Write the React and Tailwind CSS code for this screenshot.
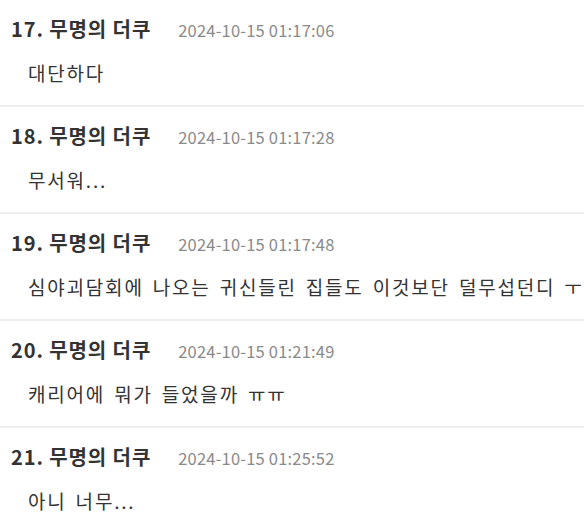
const comments = [
  { no: 17, name: '무명의 더쿠', time: '2024-10-15 01:17:06', text: '대단하다' },
  { no: 18, name: '무명의 더쿠', time: '2024-10-15 01:17:28', text: '무서워...' },
  { no: 19, name: '무명의 더쿠', time: '2024-10-15 01:17:48', text: '심야괴담회에 나오는 귀신들린 집들도 이것보단 덜무섭던디 ㅜㅜ' },
  { no: 20, name: '무명의 더쿠', time: '2024-10-15 01:21:49', text: '캐리어에 뭐가 들었을까 ㅠㅠ' },
  { no: 21, name: '무명의 더쿠', time: '2024-10-15 01:25:52', text: '아니 너무...' },
]

export default function App() {
  return (
    <div
      className="w-[584px] h-[530px] overflow-hidden bg-white"
      style={{ fontFamily: '"Noto Sans CJK KR", "Noto Sans", sans-serif' }}
    >
      <ul>
        {comments.map((c) => (
          <li key={c.no} className="h-[107px] border-b-2 border-[#eeeeee] whitespace-nowrap">
            <div className="flex items-baseline pl-[11px] pt-[14px] h-[32px]">
              <span className="text-[20px] font-bold tracking-[0.9px] text-[#333333]">
                {c.no}. {c.name}
              </span>
              <span className="ml-[27px] text-[16.5px] tracking-[0.2px] text-[#8a8a8a]">{c.time}</span>
            </div>
            <p className="pl-[28px] mt-[28px] text-[19px] leading-[26px] tracking-[1.8px] [word-spacing:3px] text-[#333333]">
              {c.text}
            </p>
          </li>
        ))}
      </ul>
    </div>
  )
}
